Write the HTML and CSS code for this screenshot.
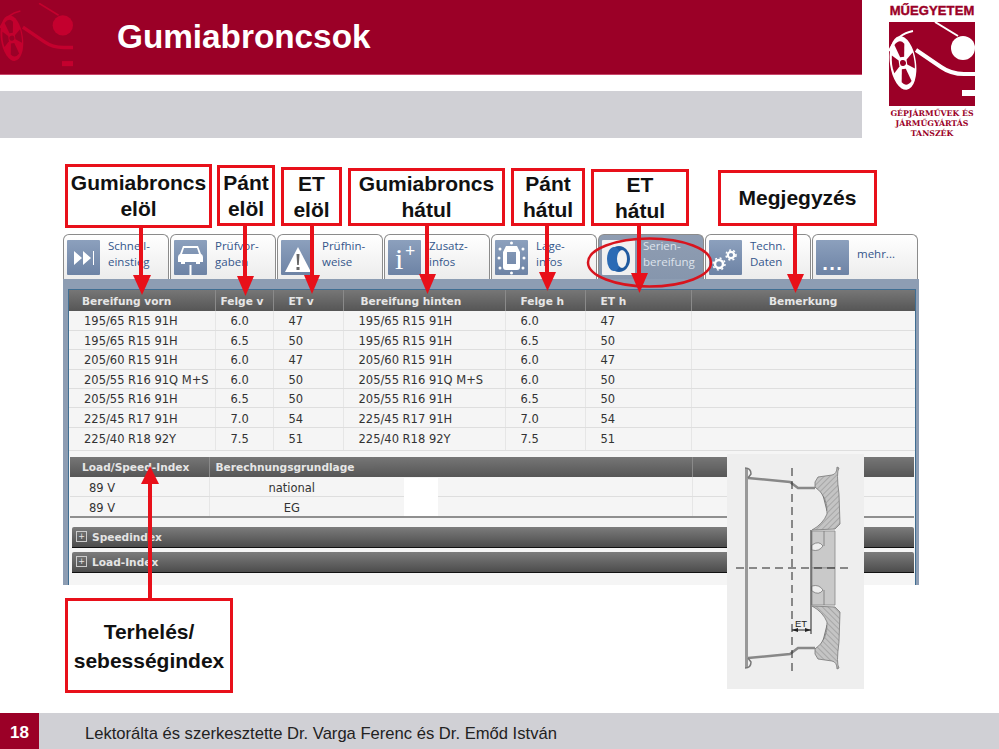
FILE: index.html
```html
<!DOCTYPE html>
<html lang="en">

<head>
    <meta charset="UTF-8" />
    <title>Gumiabroncsok</title>
    <link rel="stylesheet" href="styles.css">
</head>

<body>
    <svg class="defs" width="0" height="0">
        <symbol id="carMark" viewBox="0 0 86 84">
            <g transform="rotate(-8 14 41)">
                <ellipse cx="14" cy="41" rx="13" ry="27" />
                <g fill="#9b0027">
                    <circle cx="14" cy="41" r="3" />
                    <path d="M12 35 L8 22 Q14 16 18 22 L16 35 Z" />
                    <path d="M18 38 L25 32 Q26 42 25 48 L18 43 Z" />
                    <path d="M16 47 L20 60 Q14 66 10 60 L12 47 Z" />
                    <path d="M10 44 L4 50 Q2 42 4 32 L10 38 Z" />
                </g>
            </g>
            <circle cx="74" cy="26" r="12" />
            <path d="M46 0 L69 14" fill="none" stroke="currentColor" stroke-width="2" />
            <path d="M0 29 Q8 12 24 9" fill="none" stroke="currentColor" stroke-width="2" />
            <path d="M27 28 L52 45 Q62 52 75 52 L86 52" fill="none" stroke="currentColor" stroke-width="4" />
            <rect x="73" y="68" width="13" height="6" />
        </symbol>
        <pattern id="hatch" width="4" height="4" patternUnits="userSpaceOnUse" patternTransform="rotate(45)">
            <rect width="4" height="4" fill="#c4c4c4" />
            <line x1="0" y1="0" x2="0" y2="4" stroke="#8b8b8b" stroke-width="1" />
        </pattern>
    </svg>

    <div class="slide">
        <div class="slide-head">
            <div class="bars">
                <div class="title-bar">
                    <svg class="watermark" width="73" height="72"><use href="#carMark" /></svg>
                    <h1>Gumiabroncsok</h1>
                </div>
                <div class="sub-bar"></div>
            </div>
            <div class="logo">
                <div class="logo-name">MŰEGYETEM</div>
                <div class="logo-box">
                    <svg width="86" height="84"><use href="#carMark" /></svg>
                </div>
                <div class="logo-dept">GÉPJÁRMŰVEK ÉS<br>JÁRMŰGYÁRTÁS<br>TANSZÉK</div>
            </div>
        </div>

        <div class="screen">
            <div class="tabs">
                <div class="tab">
                    <div class="tab-icon">
                        <svg width="33" height="35" viewBox="0 0 33 35" fill="#fff">
                            <path d="M7 11 L15 18 L7 25 Z M16 11 L24 18 L16 25 Z" />
                            <rect x="26" y="11" width="1" height="14" />
                        </svg>
                    </div>
                    <div class="tab-text">Schnell-<br>einstieg</div>
                </div>
                <div class="tab">
                    <div class="tab-icon">
                        <svg width="33" height="35" viewBox="0 0 33 35" fill="#fff">
                            <path d="M9 6 H24 L27 14 Q29 15 29 17 V22 H26 V24 H22 V22 H11 V24 H7 V22 H4 V17 Q4 15 6 14 Z M10 8 L8 14 H25 L23 8 Z" fill-rule="evenodd" />
                            <rect x="15.500" y="25" width="2" height="10" />
                        </svg>
                    </div>
                    <div class="tab-text">Prüfvor-<br>gaben</div>
                </div>
                <div class="tab">
                    <div class="tab-icon">
                        <svg width="33" height="35" viewBox="0 0 33 35">
                            <path d="M17 7 L30 32 H4 Z" fill="#fff" />
                            <path d="M15.500 14 H18.500 L17.800 25 H16.200 Z M15.500 27 H18.500 V30 H15.500 Z" fill="#666" />
                        </svg>
                    </div>
                    <div class="tab-text">Prüfhin-<br>weise</div>
                </div>
                <div class="tab">
                    <div class="tab-icon tab-icon-info"><span class="info-i">i</span><span class="info-plus">+</span></div>
                    <div class="tab-text">Zusatz-<br>infos</div>
                </div>
                <div class="tab">
                    <div class="tab-icon">
                        <svg width="33" height="35" viewBox="0 0 33 35" fill="#fff">
                            <path d="M11 6 H22 L25 12 V27 Q25 30 22 30 H11 Q8 30 8 27 V12 Z M12 12 V24 H21 V12 Z" fill-rule="evenodd" />
                            <circle cx="5" cy="9" r="1.500" /><circle cx="28" cy="9" r="1.500" />
                            <circle cx="4" cy="18" r="1.500" /><circle cx="29" cy="18" r="1.500" />
                            <circle cx="5" cy="28" r="1.500" /><circle cx="28" cy="28" r="1.500" />
                            <circle cx="16.500" cy="3" r="1.500" /><circle cx="16.500" cy="33" r="1.500" />
                        </svg>
                    </div>
                    <div class="tab-text">Lage-<br>infos</div>
                </div>
                <div class="tab tab-active">
                    <div class="tab-icon tab-icon-tire">
                        <svg width="33" height="35" viewBox="0 0 33 35">
                            <ellipse cx="17" cy="19" rx="11" ry="13" fill="#1f5aa0" />
                            <ellipse cx="12" cy="19" rx="7" ry="12" fill="#2b6bb5" />
                            <ellipse cx="20" cy="19" rx="5" ry="9" fill="#f2f2f2" />
                        </svg>
                    </div>
                    <div class="tab-text">Serien-<br>bereifung</div>
                </div>
                <div class="tab">
                    <div class="tab-icon">
                        <svg width="33" height="35" viewBox="0 0 33 35" fill="none" stroke="#fff">
                            <circle cx="10" cy="24" r="4" stroke-width="2.500" />
                            <circle cx="10" cy="24" r="6" stroke-width="1.500" stroke-dasharray="2 2.700" />
                            <circle cx="22" cy="15" r="3.200" stroke-width="2.200" />
                            <circle cx="22" cy="15" r="5" stroke-width="1.500" stroke-dasharray="2 2.200" />
                        </svg>
                    </div>
                    <div class="tab-text">Techn.<br>Daten</div>
                </div>
                <div class="tab">
                    <div class="tab-icon tab-icon-more">...</div>
                    <div class="tab-text">mehr...</div>
                </div>
            </div>

            <div class="tab-body">
                <div class="frame">
                    <table class="grid tire-grid">
                        <thead>
                            <tr>
                                <th class="col-front">Bereifung vorn</th>
                                <th class="col-rim">Felge v</th>
                                <th class="col-et">ET v</th>
                                <th class="col-rear">Bereifung hinten</th>
                                <th class="col-rim-h">Felge h</th>
                                <th class="col-et-h">ET h</th>
                                <th class="col-note">Bemerkung</th>
                            </tr>
                        </thead>
                        <tbody>
                            <tr><td>195/65 R15 91H</td><td>6.0</td><td>47</td><td>195/65 R15 91H</td><td>6.0</td><td>47</td><td></td></tr>
                            <tr><td>195/65 R15 91H</td><td>6.5</td><td>50</td><td>195/65 R15 91H</td><td>6.5</td><td>50</td><td></td></tr>
                            <tr><td>205/60 R15 91H</td><td>6.0</td><td>47</td><td>205/60 R15 91H</td><td>6.0</td><td>47</td><td></td></tr>
                            <tr><td>205/55 R16 91Q M+S</td><td>6.0</td><td>50</td><td>205/55 R16 91Q M+S</td><td>6.0</td><td>50</td><td></td></tr>
                            <tr><td>205/55 R16 91H</td><td>6.5</td><td>50</td><td>205/55 R16 91H</td><td>6.5</td><td>50</td><td></td></tr>
                            <tr><td>225/45 R17 91H</td><td>7.0</td><td>54</td><td>225/45 R17 91H</td><td>7.0</td><td>54</td><td></td></tr>
                            <tr><td>225/40 R18 92Y</td><td>7.5</td><td>51</td><td>225/40 R18 92Y</td><td>7.5</td><td>51</td><td></td></tr>
                        </tbody>
                    </table>

                    <table class="grid index-grid">
                        <thead>
                            <tr>
                                <th class="col-index">Load/Speed-Index</th>
                                <th class="col-basis">Berechnungsgrundlage</th>
                                <th class="col-fill"></th>
                                <th class="col-end"></th>
                            </tr>
                        </thead>
                        <tbody>
                            <tr><td>89 V</td><td class="center">national</td><td class="no-line"></td><td></td></tr>
                            <tr><td>89 V</td><td class="center">EG</td><td class="no-line"></td><td></td></tr>
                        </tbody>
                    </table>

                    <div class="fold-bar fold-first"><span class="fold-box">+</span>Speedindex</div>
                    <div class="fold-bar"><span class="fold-box">+</span>Load-Index</div>
                </div>
            </div>
        </div>

        <div class="footer">
            <div class="page-no">18</div>
            <div class="footer-text">Lektorálta és szerkesztette Dr. Varga Ferenc és Dr. Emőd István</div>
        </div>

        <!-- patch over the screenshot -->
        <div class="white-patch"></div>

        <!-- arrows and the oval on top of the screenshot -->
        <svg class="marks" width="999" height="749" viewBox="0 0 999 749">
            <g fill="#e8101a" stroke="none">
                <rect x="139" y="226" width="4" height="50" /><path d="M133 275 H151 L142 295 Z" />
                <rect x="243" y="226" width="4" height="50" /><path d="M237 276 H254 L245.500 296 Z" />
                <rect x="310" y="226" width="4" height="50" /><path d="M304 275 H320 L312 294 Z" />
                <rect x="425" y="226" width="4" height="50" /><path d="M419 274 H436 L427.500 294 Z" />
                <rect x="545" y="226" width="4" height="48" /><path d="M539 272 H556 L547.500 291 Z" />
                <rect x="637" y="226" width="4" height="48" /><path d="M631 273 H648 L639.500 293 Z" />
                <rect x="793" y="226" width="4" height="50" /><path d="M787 274 H804 L795.500 293 Z" />
                <rect x="148" y="482" width="4" height="118" /><path d="M141 484 H159 L150 466 Z" />
            </g>
            <ellipse cx="649.500" cy="262.500" rx="61.500" ry="24" fill="none" stroke="#d8141e" stroke-width="2.500" />
        </svg>

        <div class="callout call-tire-front">Gumiabroncs<br>elöl</div>
        <div class="callout call-rim-front">Pánt<br>elöl</div>
        <div class="callout call-et-front">ET<br>elöl</div>
        <div class="callout call-tire-rear">Gumiabroncs<br>hátul</div>
        <div class="callout call-rim-rear">Pánt<br>hátul</div>
        <div class="callout call-et-rear">ET<br>hátul</div>
        <div class="callout call-note">Megjegyzés</div>
        <div class="callout call-load">Terhelés/<br>sebességindex</div>

        <div class="rim-figure">
            <svg width="137" height="235" viewBox="0 0 137 235">
                <g id="rimHalf">
                    <path d="M88 33 Q95 35 97 45 L100 57" fill="none" stroke="#777" stroke-width="1" />
                    <path d="M88 28 L91 23 L105 21 Q110 20 110 13 L112 14 Q109 18 112 40 L113 70 L108 75 L85 76 Q96 70 100 60 Q101 42 88 33 Z" fill="url(#hatch)" stroke="#777" stroke-width="0.800" />
                    <path d="M85 77 H108 V114 H85 Z" fill="#c9c9c9" stroke="#888" stroke-width="0.800" />
                    <path d="M85 91 Q92 86 96 92 Q92 98 85 96 Z" fill="#eee" stroke="#777" stroke-width="0.800" />
                    <path d="M97 77 V92" stroke="#777" stroke-width="0.800" />
                    <path d="M21 24 L63 28 L71 34 L88 34" fill="none" stroke="#888" stroke-width="2.500" />
                    <path d="M19.500 14 V114" fill="none" stroke="#999" stroke-width="3" />
                    <path d="M18 14 Q24 14 24 20 L21 24" fill="none" stroke="#777" stroke-width="1.500" />
                </g>
                <use href="#rimHalf" transform="matrix(1 0 0 -1 0 228)" />
                <path d="M65 14 V222 M9 114 H123" fill="none" stroke="#222" stroke-width="1" stroke-dasharray="8 5" />
                <path d="M84 76 V180" fill="none" stroke="#222" stroke-width="1" />
                <path d="M65 176 H84" fill="none" stroke="#222" stroke-width="1" />
                <path d="M65 176 L71 174 V178 Z M84 176 L78 174 V178 Z" fill="#222" />
                <text class="rim-label" x="68" y="173">ET</text>
            </svg>
        </div>
    </div>
</body>

</html>
```

FILE: styles.css
```css
body {
    margin: 0;
    background: #fff;
    font-family: 'Liberation Sans', Arial, sans-serif;
}

.defs {
    position: absolute;
}

.slide {
    position: relative;
    width: 999px;
    height: 749px;
    display: flex;
    flex-direction: column;
    overflow: hidden;
    background: #fff;
}

/* head */
.slide-head {
    display: flex;
    height: 138px;
    margin-bottom: 96px;
}

.bars {
    width: 862px;
}

.title-bar {
    position: relative;
    height: 75px;
    background: #9b0027;
    border-bottom: 1px solid #c9466a;
    box-sizing: border-box;
    margin-bottom: 16px;
}

.title-bar h1 {
    margin: 0;
    padding: 16px 0 0 117px;
    font-size: 33.300px;
    line-height: 42px;
    font-weight: bold;
    color: #fff;
}

.watermark {
    position: absolute;
    top: 3px;
    left: 0;
    color: #c4002e;
    fill: #c4002e;
}

.sub-bar {
    height: 47px;
    background: #d0d0d5;
}

.logo {
    width: 86px;
    margin-left: 27px;
    padding-top: 3px;
    text-align: center;
    color: #9b0027;
}

.logo-name {
    font-size: 13px;
    line-height: 15px;
    font-weight: bold;
    white-space: nowrap;
    letter-spacing: 0.1px;
    -webkit-text-stroke: 0.4px #9b0027;
}

.logo-box {
    height: 84px;
    margin-top: 4px;
    background: #9b0027;
    color: #fff;
    fill: #fff;
}

.logo-box svg {
    display: block;
}

.logo-dept {
    margin-top: 3px;
    font-family: 'DejaVu Serif', serif;
    font-size: 7.800px;
    line-height: 10px;
    font-weight: bold;
    white-space: nowrap;
}

/* screenshot */
.screen {
    width: 856px;
    margin-left: 63px;
    height: 351px;
    font-family: 'DejaVu Sans', Verdana, sans-serif;
}

.tabs {
    display: grid;
    grid-template-columns: repeat(8, 107px);
    height: 45px;
}

.tab {
    display: flex;
    align-items: center;
    gap: 8px;
    box-sizing: border-box;
    width: 106px;
    padding: 3px 0 2px 3px;
    border: 1px solid #8b8b8b;
    border-bottom: none;
    border-radius: 6px 6px 0 0;
    background: linear-gradient(#fff, #ececec);
}

.tab-active {
    background: linear-gradient(#8f9db2, #8696ad);
}

.tab-icon {
    flex: none;
    width: 33px;
    height: 35px;
    background: linear-gradient(#8ca0bd, #6d83a5);
    border-radius: 1px;
}

.tab-icon svg {
    display: block;
}

.tab-icon-tire {
    background: #f0f0f0;
}

.tab-icon-info {
    position: relative;
    color: #fff;
    font-family: 'Liberation Serif', serif;
}

.info-i {
    position: absolute;
    left: 7px;
    top: 3px;
    font-size: 30px;
    line-height: 32px;
}

.info-plus {
    position: absolute;
    left: 17px;
    top: 2px;
    font-size: 18px;
    line-height: 18px;
    font-weight: bold;
}

.tab-icon-more {
    color: #fff;
    font-size: 16px;
    line-height: 16px;
    font-weight: bold;
    letter-spacing: 1px;
    text-align: center;
    padding-top: 17px;
    box-sizing: border-box;
}

.tab-text {
    padding-bottom: 7px;
    font-family: 'Open Sans', sans-serif;
    font-size: 11.500px;
    line-height: 16px;
    color: #34568b;
}

.tab-active .tab-text {
    color: #dde3ec;
}

.tab-body {
    box-sizing: border-box;
    height: 306px;
    padding: 10px 3px 0 5px;
    background: #8d9db3;
}

.frame {
    height: 296px;
    box-sizing: border-box;
    border: 1px solid #3f6e92;
    border-bottom: none;
    background: #f5f5f5;
}

.grid {
    border-collapse: collapse;
    table-layout: fixed;
    font-size: 11.500px;
    color: #333;
}

.grid th {
    height: 21px;
    padding: 0 0 0 15px;
    box-sizing: border-box;
    font-size: 10.600px;
    font-weight: bold;
    text-align: left;
    color: #e6e6e6;
    background: linear-gradient(#767676, #565656);
    border-left: 1px solid #8a8a8a;
}

.grid th:first-child {
    border-left: none;
}

.grid td {
    padding: 2px 0 0 15px;
    box-sizing: border-box;
    height: 19.400px;
    white-space: nowrap;
    border-bottom: 1px solid #dedede;
    border-left: 1px solid #e6e6e6;
}

.grid td:first-child {
    border-left: none;
}

.tire-grid {
    width: 846px;
    border-bottom: 1px solid #8f8f8f;
}

.tire-grid tr:last-child td {
    height: 23px;
    padding-bottom: 2px;
}

.col-front { width: 146px; padding-left: 13px !important; }
.col-rim { width: 58px; padding-left: 5px !important; }
.col-et { width: 70px; }
.col-rear { width: 162px; padding-left: 17px !important; }
.col-rim-h { width: 80px; }
.col-et-h { width: 106px; }
.col-note { width: 224px; padding-left: 0 !important; text-align: center !important; }

.index-grid {
    width: 844px;
    margin: 6px 0 0 1px;
    border-bottom: 2px solid #8f8f8f;
}

.index-grid th {
    height: 20px;
}

.index-grid td {
    height: 20px;
    padding-left: 19px;
}

.col-index { width: 139px; padding-left: 12px !important; }
.col-basis { width: 165px; padding-left: 6px !important; }
.col-fill { width: 318px; border-left: none !important; }
.col-end { width: 222px; }

.grid td.center {
    padding-left: 0;
    text-align: center;
}

.grid td.no-line {
    border-left: none;
}

.fold-bar {
    display: flex;
    align-items: center;
    gap: 5px;
    height: 20px;
    margin: 4px 1px 0 3px;
    padding-left: 4px;
    font-size: 10.600px;
    font-weight: bold;
    color: #e4e4e4;
    background: linear-gradient(#7c7c7c, #4c4c4c);
    border-bottom: 1px solid #111;
    border-radius: 2px 2px 0 0;
}

.fold-first {
    margin-top: 9px;
}

.fold-box {
    width: 9px;
    height: 9px;
    border: 1px solid #ccc;
    font-size: 8px;
    line-height: 9px;
    font-weight: normal;
    text-align: center;
}

/* footer */
.footer {
    display: flex;
    align-items: center;
    height: 36px;
    margin-top: auto;
    background: #d0d0d5;
}

.page-no {
    width: 39px;
    height: 36px;
    box-sizing: border-box;
    padding: 2px 0 0 10px;
    font-size: 17px;
    line-height: 36px;
    font-weight: bold;
    color: #fff;
    background: #9b0027;
}

.footer-text {
    margin-left: 46px;
    padding-top: 6px;
    font-size: 16.600px;
    color: #222;
}

/* overlays */
.white-patch {
    position: absolute;
    left: 404px;
    top: 478px;
    width: 34px;
    height: 38px;
    background: #fff;
}

.marks {
    position: absolute;
    top: 0;
    left: 0;
}

.callout {
    position: absolute;
    box-sizing: border-box;
    display: flex;
    align-items: center;
    justify-content: center;
    text-align: center;
    border: 3px solid #e8101a;
    background: #fff;
    color: #111;
    font-size: 21px;
    line-height: 26px;
    font-weight: bold;
}

.call-tire-front { left: 65px; top: 164px; width: 147px; height: 64px; }
.call-rim-front { left: 217px; top: 165px; width: 58px; height: 61px; }
.call-et-front { left: 281px; top: 167px; width: 61px; height: 59px; }
.call-tire-rear { left: 348px; top: 168px; width: 157px; height: 58px; }
.call-rim-rear { left: 511px; top: 168px; width: 74px; height: 58px; }
.call-et-rear { left: 591px; top: 169px; width: 98px; height: 57px; }
.call-note { left: 718px; top: 170px; width: 159px; height: 56px; }
.call-load { left: 65px; top: 598px; width: 168px; height: 95px; line-height: 29px; }

.rim-figure {
    position: absolute;
    left: 727px;
    top: 454px;
    width: 137px;
    height: 235px;
    background: #eee;
}

.rim-figure svg {
    display: block;
}

.rim-label {
    font-family: 'Liberation Sans', sans-serif;
    font-size: 9.500px;
    fill: #222;
}
```
